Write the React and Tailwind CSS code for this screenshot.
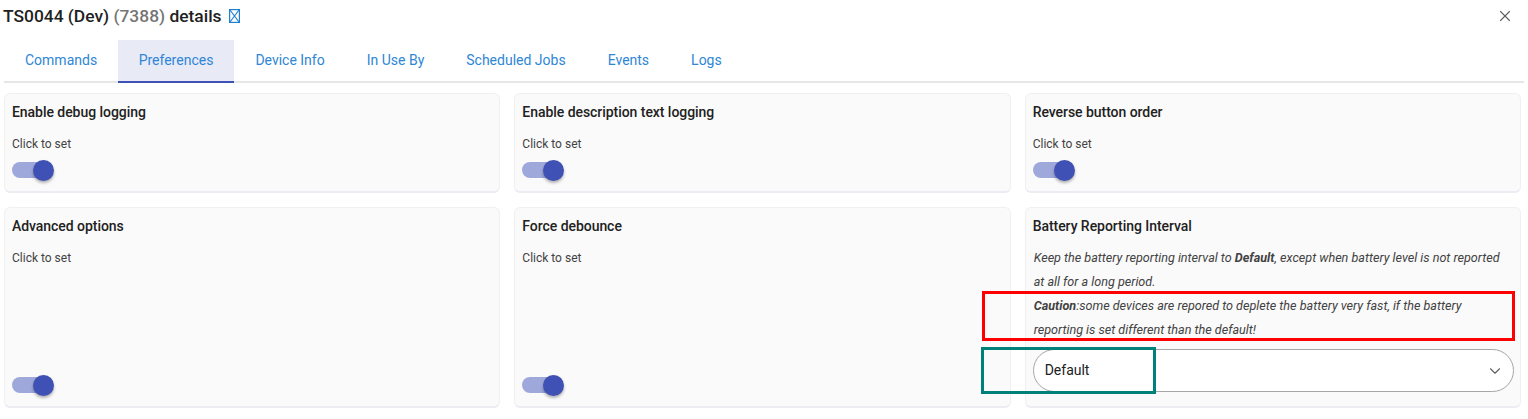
import React from 'react'
import { X, ChevronDown } from 'lucide-react'

const TABS = ['Commands', 'Preferences', 'Device Info', 'In Use By', 'Scheduled Jobs', 'Events', 'Logs']

function Toggle({ className = '' }) {
  return (
    <div className={`relative w-[42px] h-5 flex items-center ${className}`}>
      <div className="w-[36px] h-[16px] rounded-full bg-[#9fa8da]" />
      <div className="absolute right-0 top-0 w-[21px] h-[21px] rounded-full bg-[#3f51b5] shadow-[0_2px_3px_rgba(0,0,0,0.3)]" />
    </div>
  )
}

function Card({ title, children }) {
  return (
    <div className="flex flex-col rounded-md border border-[#f0f0f0] border-b-2 border-b-[#ececf2] bg-[#fafafa] pl-[7px] pr-[6px] min-w-0">
      <div className="mt-[8px] h-[20px] text-[14px] leading-[20px] font-medium tracking-[-0.05px] text-[#212121]">{title}</div>
      {children}
    </div>
  )
}

function SimpleCard({ title, tall }) {
  return (
    <Card title={title}>
      <div className="mt-[12px] text-[12px] leading-[20px] text-[#424242]">Click to set</div>
      <Toggle className={tall ? 'mt-auto mb-[11px]' : 'mt-[6px] mb-[11px]'} />
    </Card>
  )
}

export default function App() {
  return (
    <div className="relative w-[1528px] h-[419px] overflow-hidden bg-white font-['Roboto',sans-serif]">
      {/* Header */}
      <div className="flex items-center justify-between h-[32px] pl-[3px] pr-[14px]">
        <div className="flex items-center text-[17.4px] leading-[32px] font-medium text-[#212121]">
          <span>TS0044 (Dev)&nbsp;</span>
          <span className="text-[#757575]">(7388)</span>
          <span>&nbsp;details</span>
          <svg className="ml-[7px]" width="11" height="14" viewBox="0 0 11 14" fill="none" stroke="#1f7fd1" strokeWidth="1.2">
            <rect x="0.6" y="0.6" width="9.8" height="12.8" />
            <path d="M1 1 L10 13 M10 1 L1 13" />
          </svg>
        </div>
        <X size={18} strokeWidth={1.5} className="text-[#616161]" />
      </div>

      {/* Tabs */}
      <div className="flex mt-[8px] mx-[4px] h-[43px] border-b-2 border-[#e6e6e6]">
        {TABS.map((tab, i) => (
          <div
            key={tab}
            className={
              tab === 'Preferences'
                ? 'h-[43px] px-[21px] flex items-center text-[14px] text-[#2e86d6] bg-[#e8eaf6] border-b-2 border-[#3f51b5]'
                : i === 0
                  ? 'h-[41px] pl-[21px] pr-[20.5px] flex items-center text-[14px] text-[#2e86d6]'
                  : 'h-[41px] px-[21px] flex items-center text-[14px] text-[#2e86d6]'
            }
          >
            {tab}
          </div>
        ))}
      </div>

      {/* Preference cards */}
      <div className="grid grid-cols-3 grid-rows-[100px_201px] gap-x-[14px] gap-y-[14px] mt-[10px] ml-[4px] mr-[7px]">
        <SimpleCard title="Enable debug logging" />
        <SimpleCard title="Enable description text logging" />
        <SimpleCard title="Reverse button order" />
        <SimpleCard title="Advanced options" tall />
        <SimpleCard title="Force debounce" tall />
        <Card title="Battery Reporting Interval">
          <div className="mt-[10px] pl-px pr-[10px] text-[12.6px] leading-[24px] italic text-[#424242]">
            Keep the battery reporting interval to <b>Default</b>, except when battery level is not reported at all for a long period.
            <br />
            <b>Caution</b>:some devices are repored to deplete the battery very fast, if the battery reporting is set different than the default!
          </div>
          <div className="mt-[7px] h-[43px] flex items-center justify-between rounded-full border border-[#a6a6a6] bg-white pl-[11px] pr-[9px] text-[14px] text-[#212121]">
            <span>Default</span>
            <ChevronDown size={18} strokeWidth={1.5} className="text-[#616161]" />
          </div>
        </Card>
      </div>

      {/* Annotation boxes */}
      <div className="absolute left-[982px] top-[291px] w-[533px] h-[50px] border-[3px] border-[#ff0000]" />
      <div className="absolute left-[981px] top-[347px] w-[175px] h-[47px] border-[3px] border-[#00807a]" />
    </div>
  )
}
